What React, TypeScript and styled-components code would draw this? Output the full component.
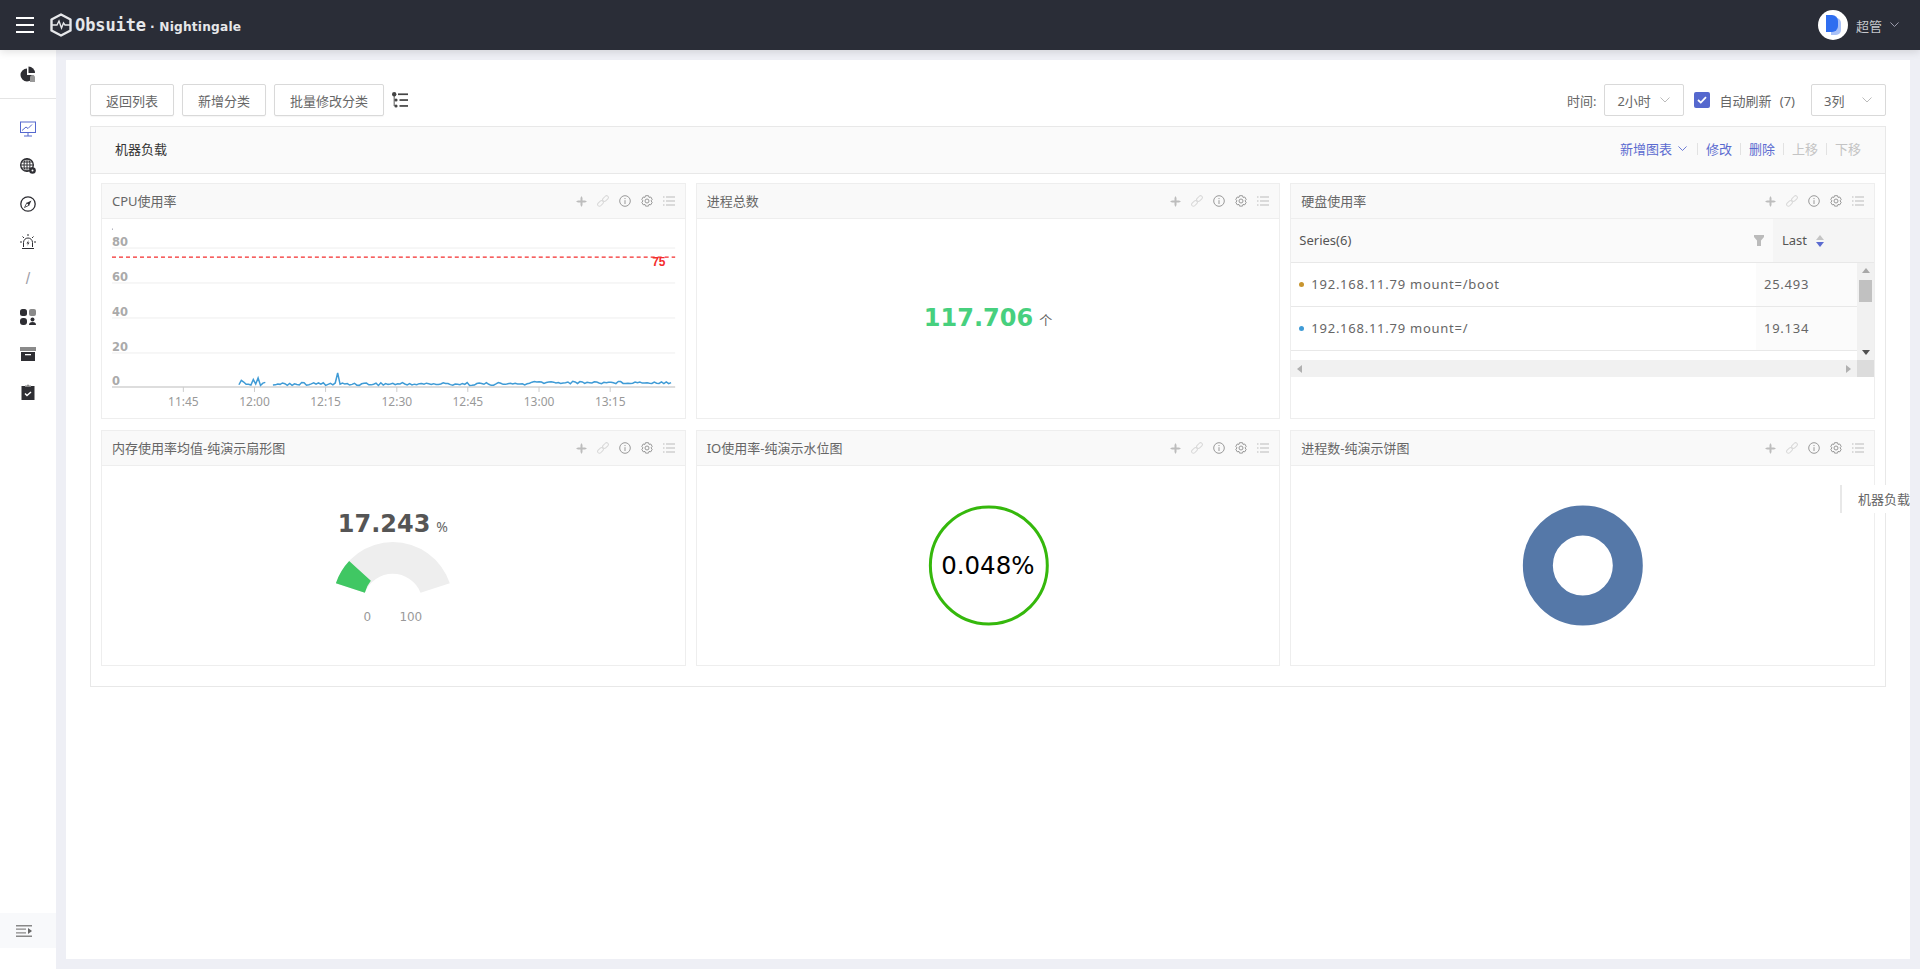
import React from 'react';
import styled, { createGlobalStyle } from 'styled-components';

const GlobalStyle = createGlobalStyle`
  html, body, #root {
    margin: 0;
    height: 100%;
    overflow: hidden;
  }
  body {
    font-family: "Noto Sans", "Noto Sans CJK SC", sans-serif;
    font-size: 13px;
    color: #666;
    background: #eeeff5;
  }
  * {
    box-sizing: border-box;
  }
`;

const Page = styled.div`
  position: relative;
  height: 969px;
  display: flex;
  flex-direction: column;
`;

const TopBar = styled.header`
  height: 50px;
  flex: none;
  background: #2a2d37;
  box-shadow: 0 2px 8px rgba(0, 0, 0, 0.12);
  display: flex;
  align-items: center;
  padding: 0 21px 0 16px;
  position: relative;
  z-index: 1;
`;

const Burger = styled.div`
  width: 18px;
  height: 16px;
  display: flex;
  flex-direction: column;
  justify-content: space-between;
  margin-right: 16px;

  span {
    display: block;
    height: 2px;
    background: #fff;
  }
`;

const LogoName = styled.span`
  font-family: "DejaVu Sans Mono", monospace;
  font-weight: 700;
  font-size: 17px;
  letter-spacing: -0.1px;
  color: #e6e7ea;
  margin-left: 3px;
`;

const LogoSub = styled.span`
  font-family: "DejaVu Sans", sans-serif;
  font-weight: 700;
  font-size: 12.2px;
  letter-spacing: 0.2px;
  color: #e6e7ea;
  margin-left: 4px;
  padding-top: 3px;
`;

const UserArea = styled.div`
  margin-left: auto;
  display: flex;
  align-items: center;
  color: #c5c7cc;
`;

const Avatar = styled.div`
  width: 30px;
  height: 30px;
  border-radius: 50%;
  background: #fff;
  display: flex;
  align-items: center;
  justify-content: center;
  margin-right: 8px;
`;

const UserName = styled.span`
  margin-right: 8px;
`;

const Columns = styled.div`
  flex: 1;
  display: flex;
  min-height: 0;
`;

const Sidebar = styled.nav`
  width: 56px;
  flex: none;
  background: #fff;
  display: flex;
  flex-direction: column;
`;

const SideTop = styled.div`
  height: 49px;
  flex: none;
  display: flex;
  align-items: center;
  justify-content: center;
  border-bottom: 1px solid #e4e4e4;
  margin-bottom: 11px;
`;

const SideItem = styled.div`
  height: 37.6px;
  display: flex;
  align-items: center;
  justify-content: center;
  flex: none;
`;

const SideSlash = styled.span`
  font-size: 16px;
  color: #a0a0a8;
  font-family: "Liberation Sans", sans-serif;
`;

const Collapse = styled.div`
  margin-top: auto;
  margin-bottom: 21px;
  height: 35px;
  padding-right: 8px;
  background: #f8f9fb;
  display: flex;
  align-items: center;
  justify-content: center;
`;

const Main = styled.main`
  flex: 1;
  min-width: 0;
  padding: 10px;
`;

const Content = styled.div`
  height: 100%;
  background: #fff;
  padding: 24px;
`;

const Toolbar = styled.div`
  display: flex;
  align-items: center;
  height: 32px;
  margin-bottom: 10px;
  gap: 8px;
`;

const Button = styled.div`
  height: 32px;
  padding: 0 15px;
  display: flex;
  align-items: center;
  border: 1px solid #d9d9d9;
  border-radius: 2px;
  background: #fff;
  box-shadow: 0 1px 1px rgba(0, 0, 0, 0.04);
  color: #666;
  white-space: nowrap;
`;

const ToolRight = styled.div`
  margin-left: auto;
  display: flex;
  align-items: center;
`;

const FieldLabel = styled.span`
  margin-right: 8px;
`;

const Select = styled.div<{ $width: number }>`
  width: ${(p) => p.$width}px;
  height: 32px;
  padding: 0 13px 0 12px;
  border: 1px solid #d9d9d9;
  border-radius: 2px;
  display: flex;
  align-items: center;
  justify-content: space-between;
  color: #666;
`;

const Check = styled.div`
  width: 16px;
  height: 16px;
  margin: 0 9px 0 10px;
  border-radius: 2px;
  background: #5568ce;
  display: flex;
  align-items: center;
  justify-content: center;
`;

const CheckLabel = styled.span`
  margin-right: 16px;
  word-spacing: 5px;
`;

const Section = styled.section`
  border: 1px solid #e8e8e8;
`;

const SectionHead = styled.div`
  height: 47px;
  background: #fafafa;
  border-bottom: 1px solid #e8e8e8;
  padding: 0 24px 3px;
  display: flex;
  align-items: center;
  justify-content: space-between;
  color: #333;
`;

const Links = styled.div`
  display: flex;
  align-items: center;
`;

const LinkText = styled.span<{ $off?: boolean }>`
  color: ${(p) => (p.$off ? '#c4c4c4' : '#5b6bd0')};
  display: flex;
  align-items: center;
  gap: 6px;
`;

const Sep = styled.i`
  width: 1px;
  height: 12px;
  background: #e2e2e2;
  margin: 0 8px;
`;

const FirstSep = styled(Sep)`
  margin-left: 10px;
`;

const Grid = styled.div`
  display: grid;
  grid-template-columns: repeat(3, 1fr);
  grid-auto-rows: 236px;
  gap: 11px 10px;
  padding: 9px 10px 20px;
`;

const Panel = styled.div`
  border: 1px solid #eee;
  display: flex;
  flex-direction: column;
  min-width: 0;
`;

const PanelHead = styled.div`
  height: 35px;
  flex: none;
  background: #f9f9f9;
  border-bottom: 1px solid #eee;
  display: flex;
  align-items: center;
  padding: 0 10px 2px 10px;
  color: #666;
`;

const PanelTools = styled.div`
  margin-left: auto;
  display: flex;
  align-items: center;
  gap: 10px;
  padding-top: 2px;
`;

const PanelBody = styled.div`
  flex: 1;
  min-height: 0;
  position: relative;
`;

const ChartSvg = styled.svg`
  display: block;
  width: 100%;
  height: 100%;
`;

const Center = styled.div`
  height: 100%;
  display: flex;
  align-items: center;
  justify-content: center;
  padding-bottom: 2px;
`;

const StatValue = styled.span`
  font-family: "DejaVu Sans", sans-serif;
  font-weight: 700;
  font-size: 24px;
  color: #47d07e;
`;

const StatUnit = styled.span`
  font-size: 13px;
  color: #666;
  margin: 4px 0 0 6px;
`;

const TableHead = styled.div`
  height: 44px;
  flex: none;
  display: flex;
  align-items: center;
  background: #fafafa;
  border-bottom: 1px solid #e8e8e8;
  color: #555;
  padding-left: 8px;
`;

const CellText = styled.span`
  margin-bottom: 2px;
`;

const RowText = styled(CellText)`
  letter-spacing: 0.75px;
`;

const FilterSlot = styled.div`
  margin-left: auto;
  margin-right: 9px;
  display: flex;
`;

const LastHead = styled.div`
  width: 101px;
  height: 100%;
  background: #f5f5f5;
  display: flex;
  align-items: center;
  padding-left: 9px;
  gap: 9px;
`;

const TableMid = styled.div`
  display: flex;
  height: 97px;
`;

const Rows = styled.div`
  flex: 1;
  min-width: 0;
  overflow: hidden;
`;

const Row = styled.div`
  height: 44px;
  display: flex;
  align-items: center;
  border-bottom: 1px solid #e8e8e8;
  padding-left: 8px;
`;

const Dot = styled.i<{ $color: string }>`
  width: 5px;
  height: 5px;
  border-radius: 50%;
  background: ${(p) => p.$color};
  margin-right: 7px;
`;

const LastCell = styled.div`
  margin-left: auto;
  width: 101px;
  height: 100%;
  background: #fbfbfb;
  display: flex;
  align-items: center;
  padding-left: 8px;
`;

const VScroll = styled.div`
  width: 17px;
  flex: none;
  background: #f1f1f1;
  display: flex;
  flex-direction: column;
  align-items: center;
  justify-content: space-between;
  padding: 5px 0;
  position: relative;
`;

const VThumb = styled.div`
  position: absolute;
  top: 17px;
  left: 2px;
  right: 2px;
  height: 22px;
  background: #c1c1c1;
`;

const HScroll = styled.div`
  height: 17px;
  flex: none;
  background: #f1f1f1;
  display: flex;
  align-items: center;
  justify-content: space-between;
  padding-left: 6px;
`;

const ScrollCorner = styled.div`
  width: 17px;
  height: 17px;
  background: #dcdcdc;
  margin-left: 6px;
`;

const HEnd = styled.div`
  display: flex;
  align-items: center;
`;

const Arrow = styled.i<{ $dir: 'up' | 'down' | 'left' | 'right'; $color: string }>`
  width: 0;
  height: 0;
  border-style: solid;
  border-color: transparent;
  ${(p) =>
    p.$dir === 'up'
      ? `border-width: 0 4px 5px; border-bottom-color: ${p.$color};`
      : p.$dir === 'down'
      ? `border-width: 5px 4px 0; border-top-color: ${p.$color};`
      : p.$dir === 'left'
      ? `border-width: 4px 5px 4px 0; border-right-color: ${p.$color};`
      : `border-width: 4px 0 4px 5px; border-left-color: ${p.$color};`}
`;

const SortStack = styled.div`
  display: flex;
  flex-direction: column;
  gap: 2px;
`;

const Anchor = styled.div`
  position: absolute;
  left: 1840px;
  top: 485px;
  width: 70px;
  height: 28px;
  background: #fff;
  border-left: 2px solid #e8e8e8;
  padding: 0 0 2px 16px;
  display: flex;
  align-items: center;
  white-space: nowrap;
  overflow: hidden;
  color: #666;
`;

const Chevron = ({ color = '#bbb', size = 10 }: { color?: string; size?: number }) => (
  <svg width={size} height={size * 0.6} viewBox="0 0 10 6" fill="none">
    <path d="M0.5 0.5 5 5 9.5 0.5" stroke={color} strokeWidth="1" />
  </svg>
);

const SideIcon = ({ children }: { children: React.ReactNode }) => (
  <svg width="16" height="16" viewBox="0 0 16 16">
    {children}
  </svg>
);

const dark = '#2e2e33';

const PanelIcons = () => (
  <PanelTools>
    <svg width="11" height="11" viewBox="0 0 11 11" fill="#bdbdbd">
      <path d="M4.5 2 5.5 0 6.5 2V4.5H9L11 5.5 9 6.5H6.5V9L5.5 11 4.5 9V6.5H2L0 5.5 2 4.5H4.5Z" />
    </svg>
    <svg width="12" height="12" viewBox="0 0 12 12" fill="none" stroke="#d8d8d8" strokeWidth="1">
      <rect x="0.2" y="6.6" width="6.6" height="3.6" rx="1.8" transform="rotate(-45 3.5 8.4)" />
      <rect x="5.2" y="1.8" width="6.6" height="3.6" rx="1.8" transform="rotate(-45 8.5 3.6)" />
    </svg>
    <svg width="12" height="12" viewBox="0 0 12 12" fill="none" stroke="#999" strokeWidth="1">
      <circle cx="6" cy="6" r="5.3" />
      <path d="M6 5.2V9M6 3V4.1" />
    </svg>
    <svg width="12" height="13" viewBox="0 0 12 13" fill="none" stroke="#999" strokeWidth="1">
      <path d="M4.5 0.7h3l.5 1.7 1.8-.4 1.4 2.5-1.2 1.4 1.2 1.4-1.4 2.5-1.8-.4-.5 1.7h-3l-.5-1.7-1.8.4L.8 7.3 2 5.9.8 4.5 2.2 2 4 2.4z" />
      <circle cx="6" cy="6" r="2" />
    </svg>
    <svg width="12" height="10" viewBox="0 0 12 10" fill="none" stroke="#bbb" strokeWidth="1">
      <path d="M0 1h1.5M3 1h9M0 5h1.5M3 5h9M0 9h1.5M3 9h9" />
    </svg>
  </PanelTools>
);

const rand = (i: number) => {
  const v = Math.sin(i * 12.9898) * 43758.5453;
  return v - Math.floor(v);
};

// fake cpu samples, x in chart px
const cpuLine = (from: number, to: number) => {
  const pts: string[] = [];
  let i = 0;
  for (let x = from; x <= to; x += 2.4) {
    i += 1;
    const pageX = x + 102;
    const n = rand(i + from) - 0.5;
    let y = 165 + n * 3;
    if (pageX < 270) y = 163.5 + n * 7;
    if (Math.abs(pageX - 259) < 1.3) y = 159;
    if (pageX > 532) y = 163.5 + n * 2.6;
    if (Math.abs(pageX - 337.6) < 1.3) y = 154;
    pts.push(`${x.toFixed(1)},${y.toFixed(1)}`);
  }
  return pts.join(' ');
};

const CpuChart = () => {
  const grid = [29, 64, 99, 134];
  const yLabels = [
    ['80', 27],
    ['60', 62],
    ['40', 97],
    ['20', 132],
    ['0', 166],
  ] as const;
  const ticks = [
    ['11:45', 81.4],
    ['12:00', 152.6],
    ['12:15', 223.7],
    ['12:30', 295],
    ['12:45', 366],
    ['13:00', 437.3],
    ['13:15', 508.5],
  ] as const;
  return (
    <ChartSvg viewBox="0 0 583 199">
      <circle cx="10.5" cy="10" r="0.6" fill="#889" />
      {grid.map((y) => (
        <line key={y} x1="10" x2="573.5" y1={y} y2={y} stroke="#eee" />
      ))}
      <line x1="10" x2="573.5" y1="168" y2="168" stroke="#ddd" strokeWidth="2" />
      {ticks.map(([label, x]) => (
        <g key={label}>
          <line x1={x} x2={x} y1="168" y2="173" stroke="#ccc" />
          <text x={x} y="187" textAnchor="middle" fontSize="12" fill="#999">
            {label}
          </text>
        </g>
      ))}
      {yLabels.map(([label, y]) => (
        <text key={label} x="10" y={y} fontFamily="DejaVu Sans, sans-serif" fontSize="11.5" fontWeight="700" fill="#aaa">
          {label}
        </text>
      ))}
      <line x1="10" x2="573.5" y1="38" y2="38" stroke="#f42c2c" strokeWidth="1.2" strokeDasharray="4 3" />
      <text x="550.5" y="47" fontFamily="Liberation Sans, sans-serif" fontSize="12" fontWeight="700" fill="#f42c2c">
        75
      </text>
      <polyline points={cpuLine(137, 165)} fill="none" stroke="#3f9bd6" strokeWidth="1.5" />
      <polyline points={cpuLine(171, 571.6)} fill="none" stroke="#3f9bd6" strokeWidth="1.5" />
    </ChartSvg>
  );
};

const GaugeChart = () => (
  <ChartSvg viewBox="0 0 583 199">
    <path d="M234 117.3A60 60 0 0 1 348 117.3L318.7 126.7A30 30 0 0 0 263 126.7Z" fill="#eee" />
    <path d="M234 117.3A60 60 0 0 1 247.3 95L269 114.7A30 30 0 0 0 263 126.7Z" fill="#40c763" />
    <text x="236" y="66" fontFamily="DejaVu Sans, sans-serif" fontWeight="700" fontSize="24" fill="#555">
      17.243
    </text>
    <text x="334.5" y="66" fontSize="14" fill="#666">
      %
    </text>
    <text x="265.5" y="155" textAnchor="middle" fontFamily="DejaVu Sans, sans-serif" fontSize="12" fill="#999">
      0
    </text>
    <text x="309" y="155" textAnchor="middle" fontFamily="DejaVu Sans, sans-serif" fontSize="12" fill="#999">
      100
    </text>
  </ChartSvg>
);

const LiquidChart = () => (
  <ChartSvg viewBox="0 0 583 199">
    <circle cx="292" cy="99.5" r="58.5" fill="#fff" stroke="#35b80c" strokeWidth="3" />
    <text x="291" y="108" textAnchor="middle" fontFamily="DejaVu Sans, sans-serif" fontSize="24.5" fill="#000">
      0.048%
    </text>
  </ChartSvg>
);

const PieChart = () => (
  <ChartSvg viewBox="0 0 583 199">
    <circle cx="292" cy="99.5" r="45" fill="none" stroke="#5578a8" strokeWidth="30" />
  </ChartSvg>
);

const DiskTable = () => (
  <>
    <TableHead>
      <CellText>Series(6)</CellText>
      <FilterSlot>
        <svg width="10" height="11" viewBox="0 0 10 11" fill="#bbb">
          <path d="M0 0H10V2L7 5.5V11H3V5.5L0 2Z" />
        </svg>
      </FilterSlot>
      <LastHead>
        <CellText>Last</CellText>
        <SortStack>
          <Arrow $dir="up" $color="#c4c4c4" />
          <Arrow $dir="down" $color="#5b6bd0" />
        </SortStack>
      </LastHead>
    </TableHead>
    <TableMid>
      <Rows>
        <Row>
          <Dot $color="#c8952f" />
          <RowText>192.168.11.79 mount=/boot</RowText>
          <LastCell>
            <RowText>25.493</RowText>
          </LastCell>
        </Row>
        <Row>
          <Dot $color="#3f9bd6" />
          <RowText>192.168.11.79 mount=/</RowText>
          <LastCell>
            <RowText>19.134</RowText>
          </LastCell>
        </Row>
      </Rows>
      <VScroll>
        <Arrow $dir="up" $color="#a8a8a8" />
        <VThumb />
        <Arrow $dir="down" $color="#505050" />
      </VScroll>
    </TableMid>
    <HScroll>
      <Arrow $dir="left" $color="#b0b0b0" />
      <HEnd>
        <Arrow $dir="right" $color="#b0b0b0" />
        <ScrollCorner />
      </HEnd>
    </HScroll>
  </>
);

const panels: { title: string; body: React.ReactNode }[] = [
  { title: 'CPU使用率', body: <CpuChart /> },
  {
    title: '进程总数',
    body: (
      <Center>
        <StatValue>117.706</StatValue>
        <StatUnit>个</StatUnit>
      </Center>
    ),
  },
  { title: '硬盘使用率', body: <DiskTable /> },
  { title: '内存使用率均值-纯演示扇形图', body: <GaugeChart /> },
  { title: 'IO使用率-纯演示水位图', body: <LiquidChart /> },
  { title: '进程数-纯演示饼图', body: <PieChart /> },
];

const App: React.FC = () => {
  return (
    <Page>
      <GlobalStyle />
      <TopBar>
        <Burger>
          <span />
          <span />
          <span />
        </Burger>
        <svg width="22" height="24" viewBox="0 0 22 24" fill="none">
          <path d="M11 1.5 20.5 6.5V17.5L11 22.5 1.5 17.5V6.5Z" stroke="#e6e7ea" strokeWidth="2.4" strokeLinejoin="round" />
          <path d="M2 12H7L9 8 11.5 15 13.5 10 15 12H21" stroke="#e6e7ea" strokeWidth="1.4" />
        </svg>
        <LogoName>Obsuite</LogoName>
        <LogoSub>· Nightingale</LogoSub>
        <UserArea>
          <Avatar>
            <svg width="16" height="20" viewBox="0 0 16 20">
              <path d="M6 3H11A5 5 0 0 1 16 8V15A5 5 0 0 1 11 20H6Z" fill="#a9c1f7" />
              <path d="M1 0H7A6 6 0 0 1 13 6V11A6 6 0 0 1 7 17H1Z" fill="#2f6ef0" />
            </svg>
          </Avatar>
          <UserName>超管</UserName>
          <Chevron color="#aab" size={9} />
        </UserArea>
      </TopBar>
      <Columns>
        <Sidebar>
          <SideTop>
            <SideIcon>
              <path d="M7 2.5a6.5 6.5 0 1 0 6.5 6.5H7Z" fill={dark} />
              <path d="M8.5 0.5a6.5 6.5 0 0 1 6.5 6.5H8.5Z" fill={dark} />
              <path d="M10 11.5a2.5 2.5 0 0 1 5 0V16h-5Z" fill="#999" />
            </SideIcon>
          </SideTop>
          <SideItem>
            <SideIcon>
              <g fill="none" stroke="#5568ce" strokeWidth="1">
                <rect x="0.5" y="1" width="15" height="10.5" />
                <path d="M2 9.5 6 6l2 1.5L12 3.5M8 11.5V15M4 15h8" />
              </g>
            </SideIcon>
          </SideItem>
          <SideItem>
            <SideIcon>
              <g fill="none" stroke={dark} strokeWidth="1">
                <circle cx="7" cy="7" r="6.3" strokeWidth="1.4" />
                <ellipse cx="7" cy="7" rx="3" ry="6.3" />
                <path d="M0.7 7h12.6M1.5 4h11M1.5 10h11M7 0.7v12.6" />
              </g>
              <circle cx="12.5" cy="12.5" r="3.3" fill={dark} />
              <circle cx="12.5" cy="12.5" r="1" fill="#fff" />
            </SideIcon>
          </SideItem>
          <SideItem>
            <SideIcon>
              <circle cx="8" cy="8" r="7.2" fill="none" stroke={dark} strokeWidth="1.3" />
              <path d="M11.5 4.5 9.2 9.2 6.8 6.8Z" fill={dark} />
              <path d="M4.5 11.5 6.8 6.8 9.2 9.2Z" fill="none" stroke={dark} strokeWidth="0.8" />
            </SideIcon>
          </SideItem>
          <SideItem>
            <SideIcon>
              <g fill="none" stroke={dark} strokeWidth="1">
                <path d="M3.5 13V8.5a4.5 4.5 0 0 1 9 0V13" />
                <path d="M2 14.5h12M8 0v2M2.5 2.5 4 4M13.5 2.5 12 4M0 8h2M14 8h2" />
              </g>
              <path d="M8.7 6 6.5 9.5H8L7.3 12l2.2-3.5H8Z" fill={dark} />
            </SideIcon>
          </SideItem>
          <SideItem>
            <SideSlash>/</SideSlash>
          </SideItem>
          <SideItem>
            <SideIcon>
              <rect x="0" y="0" width="7" height="7" rx="2.5" fill={dark} />
              <rect x="9" y="0" width="7" height="7" rx="2" fill="#8a8a8a" />
              <rect x="0" y="9" width="7" height="7" rx="3" fill={dark} />
              <circle cx="12.5" cy="10.5" r="2" fill={dark} />
              <path d="M9 16a3.5 3 0 0 1 7 0Z" fill={dark} />
            </SideIcon>
          </SideItem>
          <SideItem>
            <SideIcon>
              <rect x="0" y="1" width="16" height="4" fill="#8a8a8a" />
              <rect x="1" y="6" width="14" height="9" fill={dark} />
              <rect x="5" y="8" width="6" height="1.3" fill="#fff" />
            </SideIcon>
          </SideItem>
          <SideItem>
            <SideIcon>
              <rect x="1.5" y="2" width="13" height="14" fill={dark} />
              <path d="M5 3V1.6h2a1 1 0 0 1 2 0h2V3Z" fill="#8a8a8a" />
              <path d="M5 9.5 7 11.5 11 8" fill="none" stroke="#fff" strokeWidth="1.5" />
            </SideIcon>
          </SideItem>
          <Collapse>
            <svg width="16" height="12" viewBox="0 0 16 12" fill="none">
              <path d="M0 0.7h16M0 11.3h16" stroke="#888" strokeWidth="1.4" />
              <path d="M0 4.2h10M0 7.8h10" stroke="#888" strokeWidth="1.2" />
              <path d="M12 3 16 6 12 9Z" fill="#666" />
            </svg>
          </Collapse>
        </Sidebar>
        <Main>
          <Content>
            <Toolbar>
              <Button>返回列表</Button>
              <Button>新增分类</Button>
              <Button>批量修改分类</Button>
              <svg width="16" height="16" viewBox="0 0 16 16" fill="#444">
                <circle cx="2.2" cy="2.2" r="2.2" />
                <circle cx="4" cy="8" r="1.6" />
                <circle cx="4" cy="14" r="1.6" />
                <rect x="6" y="1.4" width="10" height="1.7" />
                <rect x="7.5" y="7.2" width="8.5" height="1.7" />
                <rect x="7.5" y="13.1" width="8.5" height="1.7" />
                <rect x="1.7" y="3" width="0.9" height="11" />
              </svg>
              <ToolRight>
                <FieldLabel>时间:</FieldLabel>
                <Select $width={80}>
                  2小时
                  <Chevron />
                </Select>
                <Check>
                  <svg width="10" height="8" viewBox="0 0 10 8" fill="none">
                    <path d="M1 4 3.8 6.6 9 1.2" stroke="#fff" strokeWidth="1.8" />
                  </svg>
                </Check>
                <CheckLabel>自动刷新 (7)</CheckLabel>
                <Select $width={75}>
                  3列
                  <Chevron />
                </Select>
              </ToolRight>
            </Toolbar>
            <Section>
              <SectionHead>
                <span>机器负载</span>
                <Links>
                  <LinkText>
                    新增图表
                    <Chevron color="#5b6bd0" size={9} />
                  </LinkText>
                  <FirstSep />
                  <LinkText>修改</LinkText>
                  <Sep />
                  <LinkText>删除</LinkText>
                  <Sep />
                  <LinkText $off>上移</LinkText>
                  <Sep />
                  <LinkText $off>下移</LinkText>
                </Links>
              </SectionHead>
              <Grid>
                {panels.map((panel) => (
                  <Panel key={panel.title}>
                    <PanelHead>
                      {panel.title}
                      <PanelIcons />
                    </PanelHead>
                    <PanelBody>{panel.body}</PanelBody>
                  </Panel>
                ))}
              </Grid>
            </Section>
          </Content>
        </Main>
      </Columns>
      <Anchor>机器负载</Anchor>
    </Page>
  );
};

export default App;
